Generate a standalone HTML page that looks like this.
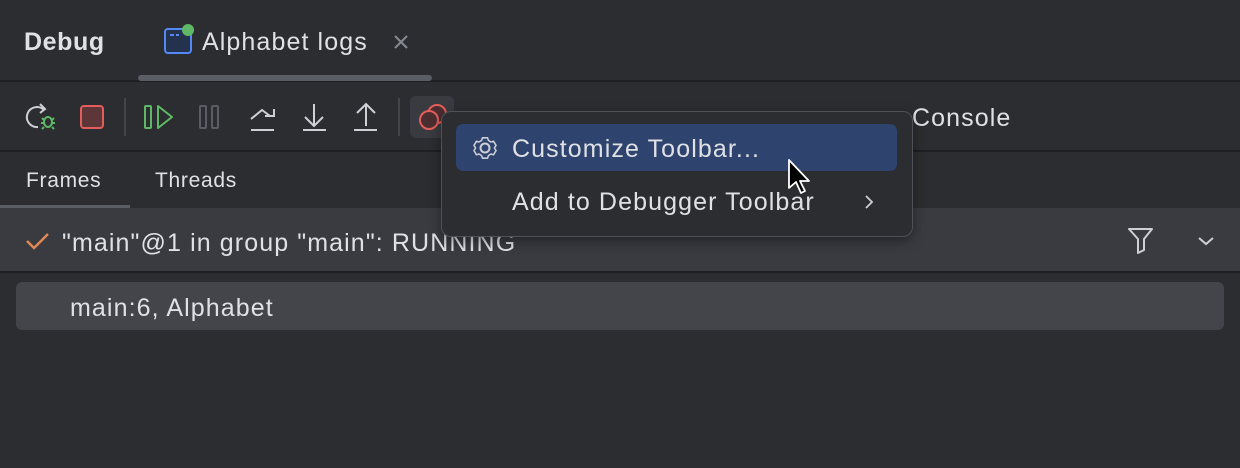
<!DOCTYPE html>
<html><head><style>
body{margin:0;width:1240px;height:468px;background:#2b2d30;font-family:"Liberation Sans",sans-serif;color:#dfe1e5;position:relative;overflow:hidden}
.a{position:absolute;white-space:nowrap}
.t{font-size:25px;letter-spacing:1.1px}
</style></head><body>
<div class="a" style="left:24px;top:28px;font-size:25px;font-weight:bold;letter-spacing:0.6px">Debug</div>
<svg class="a" style="left:160px;top:22px" width="36" height="34"><rect x="5" y="7" width="26" height="24" rx="3" fill="#25324d" stroke="#548af7" stroke-width="2"/><line x1="10" y1="13" x2="14" y2="13" stroke="#548af7" stroke-width="2"/><line x1="16" y1="13" x2="19" y2="13" stroke="#548af7" stroke-width="2"/><circle cx="28" cy="8" r="6" fill="#5fb865"/></svg>
<div class="a t" style="left:202px;top:28px">Alphabet logs</div>
<svg class="a" style="left:393px;top:34px" width="16" height="16"><path d="M2 2L14 14M14 2L2 14" stroke="#868a91" stroke-width="2"/></svg>
<div class="a" style="left:0;top:80px;width:1240px;height:2px;background:#1e1f22"></div>
<div class="a" style="left:138px;top:75px;width:294px;height:6px;border-radius:3px;background:#5a5d63"></div>
<svg class="a" style="left:0;top:82px" width="460" height="70" fill="none" stroke-width="2">
<path d="M44 28 A10 10 0 1 0 38 45" stroke="#ced0d6"/><path d="M40 22 L45 27 L40 31" stroke="#ced0d6"/>
<g stroke="#5fb865"><ellipse cx="48" cy="40" rx="4" ry="5"/><path d="M42 36l2 2M54 36l-2 2M41 41h3M52 41h3M42 47l2-2M54 47l-2-2"/></g>
<rect x="81" y="24" width="22" height="22" rx="3" fill="#5c3638" stroke="#e55d5b"/>
<line x1="125" y1="16" x2="125" y2="54" stroke="#43454a"/>
<rect x="145" y="24" width="6" height="22" rx="1" stroke="#5fb865"/><path d="M158 24 L172 35 L158 46Z" stroke="#5fb865" stroke-linejoin="round"/>
<rect x="200" y="24" width="6" height="22" rx="1" stroke="#5a5d63"/><rect x="212" y="24" width="6" height="22" rx="1" stroke="#5a5d63"/>
<path d="M251 37 L262 28 L270 34 M265 34h9v-7M251 48h23" stroke="#ced0d6"/>
<path d="M314 22v22M305 35l9 9 9-9M303 48h23" stroke="#ced0d6"/>
<path d="M366 44V22M357 31l9-9 9 9M354 48h23" stroke="#ced0d6"/>
<line x1="399" y1="16" x2="399" y2="54" stroke="#43454a"/>
<rect x="410" y="14" width="44" height="42" rx="6" fill="#393b40" stroke="none"/>
<circle cx="437" cy="32" r="9" fill="#4a2e30" stroke="#e55d5b"/><circle cx="429" cy="38" r="9" fill="#4a2e30" stroke="#e55d5b"/>
</svg>
<div class="a t" style="left:912px;top:104px">Console</div>
<div class="a" style="left:0;top:150px;width:1240px;height:2px;background:#1e1f22"></div>
<div class="a" style="left:26px;top:169px;font-size:21px;letter-spacing:0.7px">Frames</div>
<div class="a" style="left:155px;top:169px;font-size:21px;letter-spacing:0.7px">Threads</div>
<div class="a" style="left:0;top:205px;width:130px;height:3px;background:#5a5d63"></div>
<div class="a" style="left:0;top:208px;width:1240px;height:63px;background:#393b40"></div>
<div class="a" style="left:0;top:271px;width:1240px;height:2px;background:#1e1f22"></div>
<svg class="a" style="left:24px;top:230px" width="28" height="22"><path d="M3 11 L10 18 L24 4" stroke="#e08855" stroke-width="2.5" fill="none"/></svg>
<div class="a t" style="left:62px;top:229px">"main"@1 in group "main": RUNNING</div>
<svg class="a" style="left:1126px;top:226px" width="30" height="30"><path d="M3 3H26L18 13V24L12 27V13Z" stroke="#ced0d6" stroke-width="2" fill="none" stroke-linejoin="round"/></svg>
<svg class="a" style="left:1196px;top:234px" width="20" height="14"><path d="M3 4L10 10L17 4" stroke="#ced0d6" stroke-width="2" fill="none"/></svg>
<div class="a" style="left:16px;top:282px;width:1208px;height:48px;border-radius:6px;background:#43454a"></div>
<div class="a t" style="left:70px;top:294px">main:6, Alphabet</div>
<div class="a" style="left:441px;top:111px;width:470px;height:124px;border-radius:10px;background:#2b2d30;border:1px solid #4e5157;box-shadow:0 4px 12px rgba(0,0,0,.4)"></div>
<div class="a" style="left:456px;top:124px;width:441px;height:47px;border-radius:7px;background:#2e436e"></div>
<svg class="a" style="left:470px;top:133px" width="30" height="30"><circle cx="15" cy="15" r="4.5" stroke="#ced0d6" stroke-width="2" fill="none"/><path d="M12 3h6l1 3 3 2 3-1 3 5-2 3 2 3-3 5-3-1-3 2-1 3h-6l-1-3-3-2-3 1-3-5 2-3-2-3 3-5 3 1 3-2z" stroke="#ced0d6" stroke-width="1.8" fill="none" stroke-linejoin="round" transform="translate(15 15) scale(.85) translate(-15 -15)"/></svg>
<div class="a t" style="left:512px;top:135px">Customize Toolbar...</div>
<div class="a t" style="left:512px;top:188px">Add to Debugger Toolbar</div>
<svg class="a" style="left:862px;top:193px" width="14" height="18"><path d="M4 3L10 9L4 15" stroke="#ced0d6" stroke-width="1.8" fill="none"/></svg>
<svg class="a" style="left:786px;top:158px" width="28" height="40"><path d="M3 2V30L10 24L15 35L19 33L14 23H23Z" fill="#000" stroke="#fff" stroke-width="1.8" stroke-linejoin="round"/></svg>
</body></html>
